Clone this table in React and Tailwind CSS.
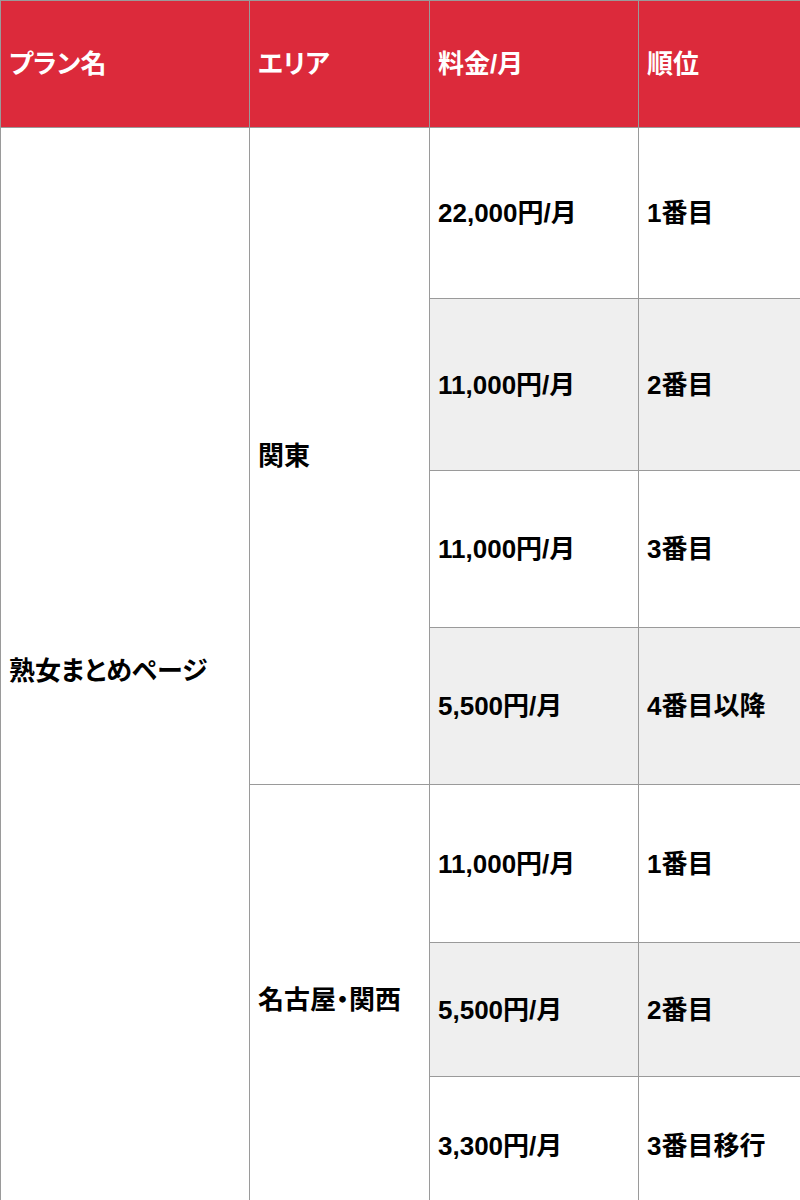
const rows = [
  { price: '22,000円/月', rank: '1番目', h: 'h-[171px]', gray: false },
  { price: '11,000円/月', rank: '2番目', h: 'h-[172px]', gray: true },
  { price: '11,000円/月', rank: '3番目', h: 'h-[157px]', gray: false },
  { price: '5,500円/月', rank: '4番目以降', h: 'h-[157px]', gray: true },
  { price: '11,000円/月', rank: '1番目', h: 'h-[158px]', gray: false },
  { price: '5,500円/月', rank: '2番目', h: 'h-[134px]', gray: true },
  { price: '3,300円/月', rank: '3番目移行', h: 'h-[138px]', gray: false }
]

const cell = 'border border-[#9a9a9a] px-[8px] align-middle text-left'
const kana = "[font-feature-settings:'palt']"

export default function App() {
  return (
    <div className="w-[800px] overflow-hidden bg-white font-['Liberation_Sans','Noto_Sans_CJK_JP',sans-serif] text-[26px] font-bold leading-none text-black">
      <table className="w-[810px] table-fixed border-collapse">
        <colgroup>
          <col className="w-[249px]" />
          <col className="w-[180px]" />
          <col className="w-[209px]" />
          <col className="w-[172px]" />
        </colgroup>
        <thead>
          <tr className="h-[127px] bg-[#dc2a3b] text-white">
            <th className={`${cell} ${kana}`}>プラン名</th>
            <th className={`${cell} ${kana}`}>エリア</th>
            <th className={cell}>料金/月</th>
            <th className={cell}>順位</th>
          </tr>
        </thead>
        <tbody>
          {rows.map((r, i) => (
            <tr key={i} className={r.h}>
              {i === 0 && (
                <td rowSpan={7} className={`${cell} ${kana} bg-white`}>
                  熟女まとめページ
                </td>
              )}
              {i === 0 && (
                <td rowSpan={4} className={`${cell} bg-white`}>
                  関東
                </td>
              )}
              {i === 4 && (
                <td rowSpan={3} className={`${cell} ${kana} bg-white`}>
                  名古屋・関西
                </td>
              )}
              <td className={`${cell} ${r.gray ? 'bg-[#efefef]' : 'bg-white'}`}>{r.price}</td>
              <td className={`${cell} ${r.gray ? 'bg-[#efefef]' : 'bg-white'}`}>{r.rank}</td>
            </tr>
          ))}
        </tbody>
      </table>
    </div>
  )
}
